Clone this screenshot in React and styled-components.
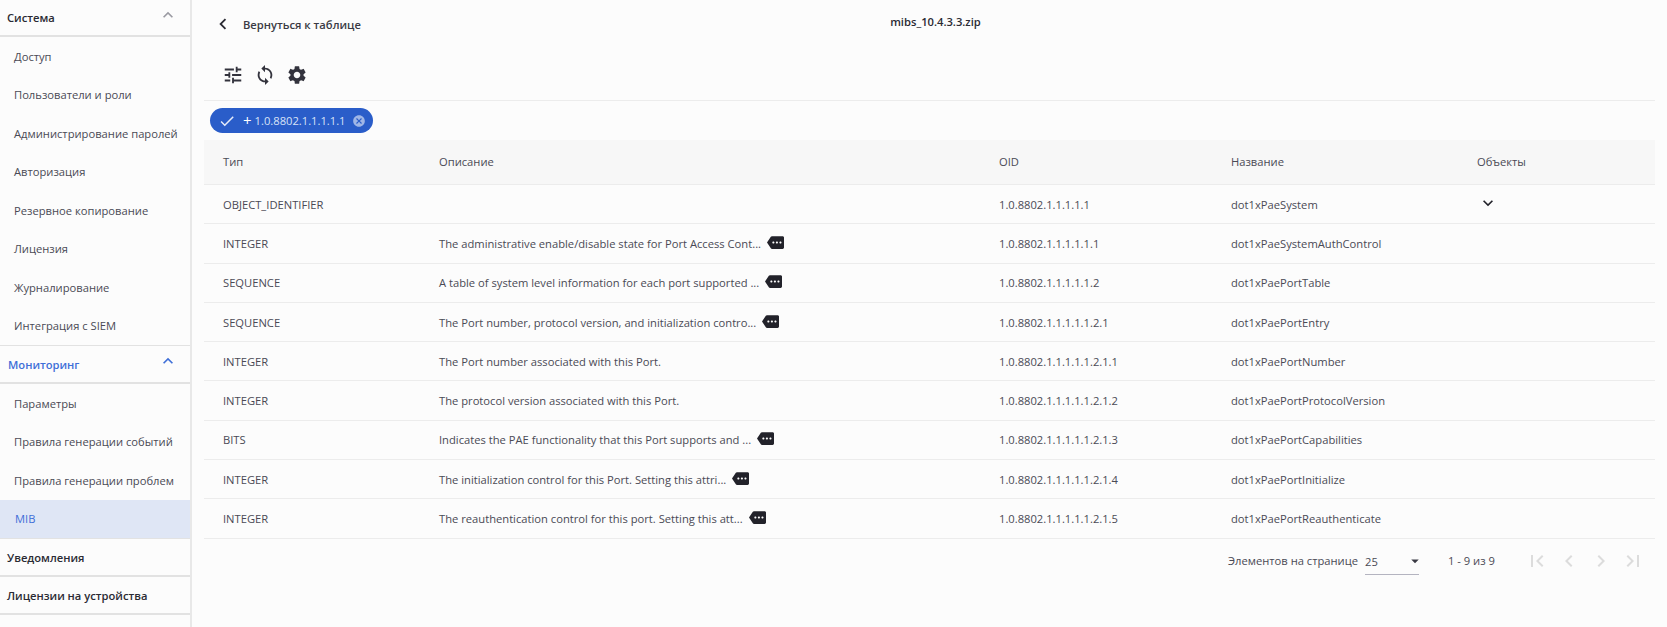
import React from "react";
import styled, { createGlobalStyle } from "styled-components";
import {
  MdExpandLess,
  MdChevronLeft,
  MdChevronRight,
  MdTune,
  MdSync,
  MdSettings,
  MdCheck,
  MdCancel,
  MdMore,
  MdKeyboardArrowDown,
  MdArrowDropDown,
  MdFirstPage,
  MdLastPage,
} from "react-icons/md";

const systemItems = [
  "Доступ",
  "Пользователи и роли",
  "Администрирование паролей",
  "Авторизация",
  "Резервное копирование",
  "Лицензия",
  "Журналирование",
  "Интеграция с SIEM",
];

const monitoringItems = ["Параметры", "Правила генерации событий", "Правила генерации проблем"];

const rows = [
  { type: "OBJECT_IDENTIFIER", desc: "", oid: "1.0.8802.1.1.1.1.1", name: "dot1xPaeSystem", objects: true },
  { type: "INTEGER", desc: "The administrative enable/disable state for Port Access Cont...", more: true, oid: "1.0.8802.1.1.1.1.1.1", name: "dot1xPaeSystemAuthControl" },
  { type: "SEQUENCE", desc: "A table of system level information for each port supported ...", more: true, oid: "1.0.8802.1.1.1.1.1.2", name: "dot1xPaePortTable" },
  { type: "SEQUENCE", desc: "The Port number, protocol version, and initialization contro...", more: true, oid: "1.0.8802.1.1.1.1.1.2.1", name: "dot1xPaePortEntry" },
  { type: "INTEGER", desc: "The Port number associated with this Port.", oid: "1.0.8802.1.1.1.1.1.2.1.1", name: "dot1xPaePortNumber" },
  { type: "INTEGER", desc: "The protocol version associated with this Port.", oid: "1.0.8802.1.1.1.1.1.2.1.2", name: "dot1xPaePortProtocolVersion" },
  { type: "BITS", desc: "Indicates the PAE functionality that this Port supports and ...", more: true, oid: "1.0.8802.1.1.1.1.1.2.1.3", name: "dot1xPaePortCapabilities" },
  { type: "INTEGER", desc: "The initialization control for this Port. Setting this attri...", more: true, oid: "1.0.8802.1.1.1.1.1.2.1.4", name: "dot1xPaePortInitialize" },
  { type: "INTEGER", desc: "The reauthentication control for this port. Setting this att...", more: true, oid: "1.0.8802.1.1.1.1.1.2.1.5", name: "dot1xPaePortReauthenticate" },
];

function App() {
  return (
    <Page>
      <GlobalStyle />
      <Sidebar>
        <GroupHeader>
          Система
          <GroupArrow />
        </GroupHeader>
        <GroupList>
          {systemItems.map((item) => (
            <NavItem key={item}>{item}</NavItem>
          ))}
        </GroupList>
        <GroupHeader $active>
          Мониторинг
          <GroupArrow $active />
        </GroupHeader>
        <GroupList>
          {monitoringItems.map((item) => (
            <NavItem key={item}>{item}</NavItem>
          ))}
          <NavItem $selected>MIB</NavItem>
        </GroupList>
        <GroupHeader>Уведомления</GroupHeader>
        <GroupHeader>Лицензии на устройства</GroupHeader>
      </Sidebar>

      <Main>
        <TopBar>
          <BackIcon />
          <BackLabel>Вернуться к таблице</BackLabel>
          <FileName>mibs_10.4.3.3.zip</FileName>
        </TopBar>

        <Toolbar>
          <ToolIcon as={MdTune} />
          <ToolIcon as={MdSync} />
          <ToolIcon as={MdSettings} />
        </Toolbar>

        <ChipRow>
          <Chip>
            <ChipCheck />
            <ChipPlus>+</ChipPlus>
            <ChipText>1.0.8802.1.1.1.1.1</ChipText>
            <ChipClose />
          </Chip>
        </ChipRow>

        <Table>
          <HeadRow>
            <Cell>Тип</Cell>
            <Cell>Описание</Cell>
            <Cell>OID</Cell>
            <Cell>Название</Cell>
            <Cell>Объекты</Cell>
          </HeadRow>
          {rows.map((r) => (
            <BodyRow key={r.oid}>
              <Cell>{r.type}</Cell>
              <Cell>
                {r.desc}
                {r.more && <MoreIcon />}
              </Cell>
              <Cell>{r.oid}</Cell>
              <Cell>{r.name}</Cell>
              <Cell>{r.objects && <ExpandIcon />}</Cell>
            </BodyRow>
          ))}
        </Table>

        <Pagination>
          <PageLabel>Элементов на странице</PageLabel>
          <PageSelect>
            25
            <SelectArrow />
          </PageSelect>
          <PageRange>1 - 9 из 9</PageRange>
          <PageButtons>
            <PageIcon as={MdFirstPage} />
            <PageIcon as={MdChevronLeft} />
            <PageIcon as={MdChevronRight} />
            <PageIcon as={MdLastPage} />
          </PageButtons>
        </Pagination>
      </Main>
    </Page>
  );
}

const GlobalStyle = createGlobalStyle`
  html, body {
    margin: 0;
    padding: 0;
    background: #fcfcfc;
  }
  body {
    font-family: "Open Sans", "Noto Sans", sans-serif;
    font-size: 11.2px;
    color: #4a4a55;
  }
`;

const Page = styled.div`
  display: flex;
  width: 1667px;
  height: 627px;
  overflow: hidden;
  background: #fcfcfc;
`;

const Sidebar = styled.aside`
  flex: 0 0 190px;
  box-sizing: content-box;
  border-right: 2px solid #e8e8e8;
`;

const GroupHeader = styled.div`
  display: flex;
  align-items: center;
  justify-content: space-between;
  box-sizing: border-box;
  height: 38px;
  padding: 0 12px 0 ${(p) => (p.$active ? "8px" : "7px")};
  border-bottom: 2px solid #e2e2e2;
  font-weight: 600;
  color: ${(p) => (p.$active ? "#3f6fd8" : "#2a2a33")};

  &:first-child {
    height: 37px;
  }
`;

const GroupArrow = styled(MdExpandLess)`
  width: 20px;
  height: 20px;
  margin-top: -6px;
  color: ${(p) => (p.$active ? "#3f6fd8" : "#9a9aa2")};
`;

const GroupList = styled.div`
  display: flex;
  flex-direction: column;
  border-bottom: 1px solid #e2e2e2;
`;

const NavItem = styled.div`
  display: flex;
  align-items: center;
  box-sizing: border-box;
  height: 38.5px;
  padding-left: ${(p) => (p.$selected ? "15px" : "14px")};
  color: ${(p) => (p.$selected ? "#3f6fd8" : "#4a4a55")};
  background: ${(p) => (p.$selected ? "#dfe6f5" : "transparent")};
`;

const Main = styled.main`
  flex: 1;
  min-width: 0;
  padding: 0 12px 0 12px;
`;

const TopBar = styled.div`
  position: relative;
  display: flex;
  align-items: center;
  height: 37px;
  padding: 11px 0 0 8px;
  box-sizing: border-box;
`;

const BackIcon = styled(MdChevronLeft)`
  width: 22px;
  height: 22px;
  color: #2a2a33;
`;

const BackLabel = styled.span`
  margin-left: 9px;
  font-weight: 600;
  color: #3a3a44;
`;

const FileName = styled.span`
  position: absolute;
  left: 12px;
  right: 0;
  top: 14px;
  text-align: center;
  font-weight: 600;
  color: #2a2a33;
`;

const Toolbar = styled.div`
  display: flex;
  align-items: center;
  gap: 10px;
  height: 64px;
  padding: 13px 0 0 18px;
  box-sizing: border-box;
  border-bottom: 1px solid #ececec;
`;

const ToolIcon = styled.svg`
  width: 22px;
  height: 22px;
  color: #33333d;
`;

const ChipRow = styled.div`
  display: flex;
  height: 39px;
  padding: 7px 0 0 6px;
  box-sizing: border-box;
`;

const Chip = styled.div`
  display: flex;
  align-items: center;
  height: 25px;
  width: 163px;
  box-sizing: border-box;
  padding: 0 7px 0 8px;
  border-radius: 13px;
  background: #2a5dc9;
  color: #d8e2f7;
`;

const ChipCheck = styled(MdCheck)`
  width: 18px;
  height: 18px;
  color: #e6ecfa;
`;

const ChipPlus = styled.span`
  margin-left: 7px;
  font-size: 15px;
  line-height: 1;
  color: #fff;
`;

const ChipText = styled.span`
  margin-left: 3px;
  flex: 1;
  white-space: nowrap;
`;

const ChipClose = styled(MdCancel)`
  width: 14px;
  height: 14px;
  color: #9fb6e6;
`;

const Table = styled.div`
  display: flex;
  flex-direction: column;
`;

const columns = "216px 560px 232px 246px 1fr";

const HeadRow = styled.div`
  display: grid;
  grid-template-columns: ${columns};
  align-items: center;
  height: 45px;
  padding: 0 0 1px 19px;
  box-sizing: border-box;
  background: #f7f7f7;
  border-bottom: 1px solid #ececec;
`;

const BodyRow = styled.div`
  display: grid;
  grid-template-columns: ${columns};
  align-items: center;
  height: 39.3px;
  padding-left: 19px;
  box-sizing: border-box;
  border-bottom: 1px solid #ececec;
`;

const Cell = styled.div`
  display: flex;
  align-items: center;
  white-space: nowrap;
`;

const MoreIcon = styled(MdMore)`
  width: 17px;
  height: 17px;
  margin-left: 6px;
  color: #22222a;
  transform: translateY(-1px);
`;

const ExpandIcon = styled(MdKeyboardArrowDown)`
  width: 20px;
  height: 20px;
  margin: -3px 0 0 1px;
  color: #22222a;
`;

const Pagination = styled.div`
  display: flex;
  align-items: center;
  height: 44px;
  padding: 0 0 0 1024px;
`;

const PageLabel = styled.span`
  white-space: nowrap;
`;

const PageSelect = styled.div`
  display: flex;
  align-items: center;
  justify-content: space-between;
  box-sizing: border-box;
  width: 54px;
  height: 27px;
  margin: 2px 0 0 7px;
  border-bottom: 1px solid #b4b4c0;
`;

const SelectArrow = styled(MdArrowDropDown)`
  width: 18px;
  height: 18px;
  margin-right: -5px;
  color: #3a3a44;
`;

const PageRange = styled.span`
  margin-left: 29px;
  white-space: nowrap;
`;

const PageButtons = styled.div`
  display: flex;
  align-items: center;
  gap: 8px;
  margin-left: 30px;
`;

const PageIcon = styled.svg`
  width: 24px;
  height: 24px;
  color: #dcdcdc;
`;

export default App;
